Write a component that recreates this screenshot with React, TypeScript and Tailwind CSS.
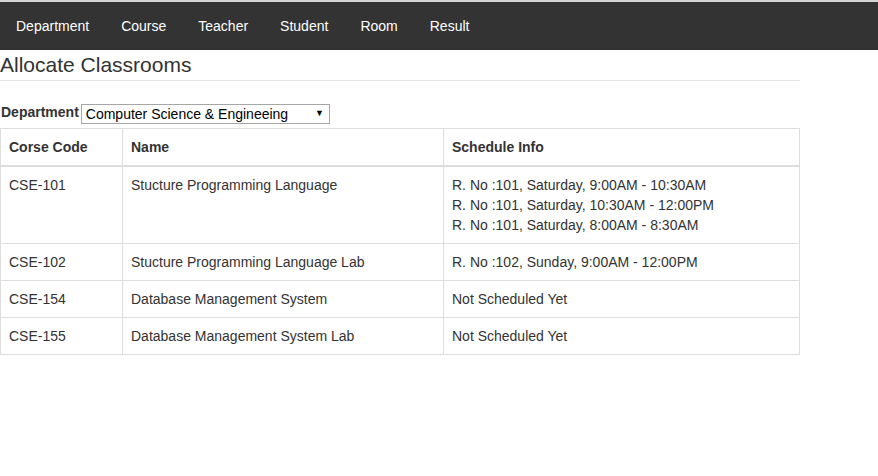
import React from "react";

const rows = [
  {
    code: "CSE-101",
    name: "Stucture Programming Language",
    info: [
      "R. No :101, Saturday, 9:00AM - 10:30AM",
      "R. No :101, Saturday, 10:30AM - 12:00PM",
      "R. No :101, Saturday, 8:00AM - 8:30AM",
    ],
  },
  {
    code: "CSE-102",
    name: "Stucture Programming Language Lab",
    info: ["R. No :102, Sunday, 9:00AM - 12:00PM"],
  },
  { code: "CSE-154", name: "Database Management System", info: ["Not Scheduled Yet"] },
  { code: "CSE-155", name: "Database Management System Lab", info: ["Not Scheduled Yet"] },
];

const navItems = ["Department", "Course", "Teacher", "Student", "Room", "Result"];

export default function App() {
  return (
    <div
      className="min-h-[476px] bg-white text-[14px] leading-[20px] text-[#333]"
      style={{ fontFamily: '"Liberation Sans", Arial, Helvetica, sans-serif' }}
    >
      <nav className="border-t-2 border-[#d4d4d4] bg-[#333] h-[50px] flex items-center">
        {navItems.map((n) => (
          <a key={n} className="px-4 text-white leading-[20px] cursor-pointer">
            {n}
          </a>
        ))}
      </nav>
      <div className="w-[800px]">
        <h2 className="mt-[3px] pb-[4px] border-b border-[#e5e5e5] text-[21px] leading-[23px] font-normal text-[#333]">
          Allocate Classrooms
        </h2>
        <div className="flex items-start pt-[21px] pl-[1px]">
          <label className="font-bold text-[#333] leading-[20px]">Department</label>
          <div className="relative ml-[2px] mt-[2px]">
            <select className="appearance-none w-[249px] h-[20px] border border-[#a6a6a6] bg-white text-black text-[14px] leading-[18px] pl-[4px] pr-5 rounded-none outline-none">
              <option>Computer Science &amp; Engineeing</option>
            </select>
            <span className="pointer-events-none absolute right-[6px] top-[4px] text-[9px] leading-[10px] text-black">
              ▼
            </span>
          </div>
        </div>
        <table className="mt-[4px] w-[799px] border-collapse table-fixed">
          <colgroup>
            <col className="w-[122px]" />
            <col className="w-[321px]" />
            <col className="w-[356px]" />
          </colgroup>
          <thead>
            <tr>
              <th className="border border-[#ddd] border-b-2 p-2 text-left font-bold">Corse Code</th>
              <th className="border border-[#ddd] border-b-2 p-2 text-left font-bold">Name</th>
              <th className="border border-[#ddd] border-b-2 p-2 text-left font-bold">Schedule Info</th>
            </tr>
          </thead>
          <tbody>
            {rows.map((r) => (
              <tr key={r.code}>
                <td className="border border-[#ddd] p-2 align-top">{r.code}</td>
                <td className="border border-[#ddd] p-2 align-top">{r.name}</td>
                <td className="border border-[#ddd] p-2 align-top">
                  {r.info.map((i) => (
                    <div key={i}>{i}</div>
                  ))}
                </td>
              </tr>
            ))}
          </tbody>
        </table>
      </div>
    </div>
  );
}
